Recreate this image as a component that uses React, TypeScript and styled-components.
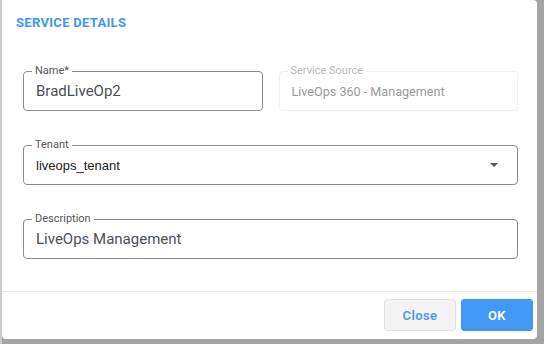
import React from "react";
import styled, { createGlobalStyle } from "styled-components";

const GlobalStyle = createGlobalStyle`
  html, body {
    margin: 0;
    padding: 0;
    background: #a4a4a4;
    font-family: Roboto, "Liberation Sans", Arial, sans-serif;
  }
`;

const Backdrop = styled.div`
  width: 544px;
  height: 344px;
  overflow: hidden;
  background: linear-gradient(to right, #cbcbcb 0 2px, #a4a4a4 2px);
`;

const Dialog = styled.div`
  margin-left: 2px;
  width: 535px;
  height: 339px;
  background: #fff;
  border-radius: 0 4px 4px 4px;
  display: flex;
  flex-direction: column;
  box-sizing: border-box;
`;

const Title = styled.h2`
  margin: 0;
  padding: 15px 14px 0;
  height: 44px;
  box-sizing: border-box;
  font-size: 13px;
  font-weight: 700;
  color: #3f97f2;
  letter-spacing: 0.3px;
`;

const Content = styled.div`
  flex: 1;
  padding: 27px 19px 0 21px;
  display: flex;
  flex-direction: column;
  gap: 34px;
`;

const Row = styled.div`
  display: flex;
  gap: 16px;
  & > * {
    flex: 1 1 0;
  }
`;

const Field = styled.div<{ disabled?: boolean }>`
  position: relative;
  height: 40px;
  box-sizing: border-box;
  border: 1px solid ${p => (p.disabled ? "#f0f0f0" : "#8d8d8d")};
  border-radius: 4px;
  display: flex;
  align-items: center;
  padding: 0 12px;
`;

const Label = styled.span<{ disabled?: boolean }>`
  position: absolute;
  top: -8px;
  left: 8px;
  padding: 0 3px;
  background: #fff;
  font-size: 11px;
  line-height: 14px;
  color: ${p => (p.disabled ? "#b9b9b9" : "#555")};
`;

const Value = styled.span<{ size?: number; tone?: string; face?: string }>`
  flex: 1;
  font-size: ${p => p.size || 15}px;
  color: ${p => p.tone || "#4a4f57"};
  font-family: ${p => p.face || "Roboto, sans-serif"};
`;

const Arrow = styled.svg`
  width: 8px;
  height: 4px;
  margin-right: 7px;
`;

const Footer = styled.div`
  border-top: 1px solid #e6e6e6;
  padding: 7px 4px 8px;
  display: flex;
  justify-content: flex-end;
  gap: 5px;
`;

const Button = styled.button<{ primary?: boolean }>`
  width: 72px;
  height: 32px;
  border-radius: 3px;
  border: 1px solid ${p => (p.primary ? "#4299f5" : "#e2e2e2")};
  background: ${p => (p.primary ? "#4299f5" : "#f3f3f3")};
  color: ${p => (p.primary ? "#fff" : "#4a9af0")};
  font-family: Roboto, sans-serif;
  font-size: 13px;
  font-weight: 600;
  letter-spacing: 0.4px;
  cursor: pointer;
`;

export default function App() {
  return (
    <>
      <GlobalStyle />
      <Backdrop>
        <Dialog>
          <Title>SERVICE DETAILS</Title>
          <Content>
            <Row>
              <Field>
                <Label>Name*</Label>
                <Value>BradLiveOp2</Value>
              </Field>
              <Field disabled>
                <Label disabled>Service Source</Label>
                <Value size={12.6} tone="#9a9a9a">
                  LiveOps 360 - Management
                </Value>
              </Field>
            </Row>
            <Field>
              <Label>Tenant</Label>
              <Value size={13} tone="#222" face={'"Liberation Sans", Arial, sans-serif'}>
                liveops_tenant
              </Value>
              <Arrow viewBox="0 0 8 4">
                <polygon points="0,0 8,0 4,4" fill="#555" />
              </Arrow>
            </Field>
            <Field>
              <Label>Description</Label>
              <Value>LiveOps Management</Value>
            </Field>
          </Content>
          <Footer>
            <Button>Close</Button>
            <Button primary>OK</Button>
          </Footer>
        </Dialog>
      </Backdrop>
    </>
  );
}
